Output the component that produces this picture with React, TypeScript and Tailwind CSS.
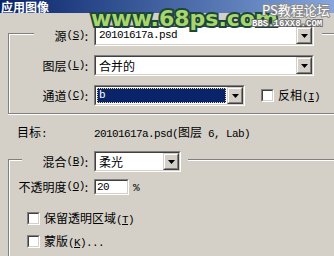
import React from 'react';

const Lat = ({ children }: { children: React.ReactNode }) => (
    <span className="font-['Liberation_Mono',monospace] text-[11px] tracking-[-0.6px]">{children}</span>
);

// access key, underlined like the old win32 dialogs
const Key = ({ k }: { k: string }) => (
    <Lat>
        (<span className="underline underline-offset-1">{k}</span>)
    </Lat>
);

const Etch = ({ className = '' }: { className?: string }) => (
    <div className={`h-[2px] border-t border-b border-t-[#808080] border-b-white ${className}`} />
);

const Sunken = ({ className = '', children }: { className?: string; children?: React.ReactNode }) => (
    <div className={`border border-t-[#808080] border-l-[#808080] border-b-white border-r-white ${className}`}>
        <div className="h-full w-full flex border border-t-[#404040] border-l-[#404040] border-b-[#d4d0c8] border-r-[#d4d0c8] bg-white">
            {children}
        </div>
    </div>
);

const ArrowBtn = () => (
    <div className="w-[16px] h-full bg-[#d4d0c8] border border-t-[#d4d0c8] border-l-[#d4d0c8] border-b-[#404040] border-r-[#404040]">
        <div className="h-full w-full flex items-center justify-center border border-t-white border-l-white border-b-[#808080] border-r-[#808080]">
            <svg width="7" height="4" viewBox="0 0 7 4">
                <path d="M0 0h7L3.5 4z" fill="#000" />
            </svg>
        </div>
    </div>
);

const Combo = ({ className, children, selected }: { className: string; children: React.ReactNode; selected?: boolean }) => (
    <Sunken className={`h-[21px] ${className}`}>
        <div className="flex-1 flex items-center p-[1px]">
            {selected ? (
                <div className="h-full w-full flex items-center pl-[1px] bg-[#0a246a] text-white border border-dotted border-[#f5db95]">
                    {children}
                </div>
            ) : (
                <div className="pl-[2px] flex items-center">{children}</div>
            )}
        </div>
        <ArrowBtn />
    </Sunken>
);

const Check = () => <Sunken className="w-[13px] h-[13px]" />;

const Label = ({ className, children }: { className: string; children: React.ReactNode }) => (
    <div className={`h-[21px] flex items-center justify-end whitespace-nowrap ${className}`}>{children}</div>
);

export default function App() {
    return (
        <div className="relative w-[334px] h-[256px] overflow-hidden flex flex-col bg-[#d4d0c8] text-black text-[12px] font-['Noto_Sans_CJK_SC','Liberation_Sans',sans-serif]">
            <div className="h-[13px] shrink-0 flex items-center pl-[1px] bg-linear-to-r from-[#0a246a] to-[#86a6dc]">
                <span className="text-white font-bold text-[12px] leading-[12px]">应用图像</span>
            </div>

            {/* 源 group */}
            <div className="ml-[8px] mt-[20px] pb-[7px] border-l border-b border-[#808080] shadow-[inset_1px_0_0_#fff,0_1px_0_#fff]">
                <div className="flex items-start -mt-[8px] h-[21px]">
                    <Etch className="mt-[8px] w-[25px]" />
                    <Label className="w-[54px]">
                        源<Key k="S" />:
                    </Label>
                    <Combo className="ml-[6px] w-[220px]">
                        <Lat>20101617a.psd</Lat>
                    </Combo>
                    <Etch className="mt-[8px] ml-[8px] flex-1" />
                </div>
                <div className="flex items-center mt-[9px] h-[21px]">
                    <Label className="w-[79px]">
                        图层<Key k="L" />:
                    </Label>
                    <Combo className="ml-[6px] w-[220px]">合并的</Combo>
                </div>
                <div className="flex items-center mt-[9px] h-[21px]">
                    <Label className="w-[79px]">
                        通道<Key k="C" />:
                    </Label>
                    <Combo className="ml-[6px] w-[151px]" selected>
                        <Lat>b</Lat>
                    </Combo>
                    <div className="ml-[16px]">
                        <Check />
                    </div>
                    <span className="ml-[4px]">
                        反相<Key k="I" />
                    </span>
                </div>
            </div>

            <div className="flex items-center mt-[12px] h-[14px] pl-[17px] whitespace-nowrap">
                <span className="w-[77px]">
                    目标<Lat>:</Lat>
                </span>
                <span>
                    <Lat>20101617a.psd(</Lat>图层<Lat> 6, Lab)</Lat>
                </span>
            </div>

            {/* 混合 group */}
            <div className="flex-1 ml-[8px] mt-[19px] border-l border-[#808080] shadow-[inset_1px_0_0_#fff]">
                <div className="flex items-start -mt-[8px] h-[21px]">
                    <Etch className="mt-[8px] w-[13px]" />
                    <Label className="w-[66px]">
                        混合<Key k="B" />:
                    </Label>
                    <Combo className="ml-[6px] w-[87px]">柔光</Combo>
                    <Etch className="mt-[8px] ml-[7px] flex-1" />
                </div>
                <div className="flex items-center mt-[7px] h-[16px]">
                    <div className="w-[79px] flex justify-end whitespace-nowrap">
                        不透明度<Key k="O" />:
                    </div>
                    <Sunken className="ml-[6px] w-[35px] h-[16px]">
                        <div className="pl-[1px] flex items-center">
                            <Lat>20</Lat>
                        </div>
                    </Sunken>
                    <span className="ml-[4px]">
                        <Lat>%</Lat>
                    </span>
                </div>
                <div className="flex items-center mt-[17px] h-[13px] pl-[18px]">
                    <Check />
                    <span className="ml-[4px]">
                        保留透明区域<Key k="T" />
                    </span>
                </div>
                <div className="flex items-center mt-[10px] h-[13px] pl-[18px]">
                    <Check />
                    <span className="ml-[4px]">
                        蒙版<Key k="K" />
                        <Lat>...</Lat>
                    </span>
                </div>
            </div>

            {/* watermark stamped over the screenshot */}
            <div className="absolute left-[91px] top-[8px] pointer-events-none font-['DejaVu_Sans',sans-serif] font-bold text-[22px] leading-[22px] text-[#a8d66c] [-webkit-text-stroke:4px_#1c463b] [paint-order:stroke_fill]">
                www.68ps.com
            </div>
            <div className="absolute left-[262px] top-[2px] pointer-events-none text-[13px] leading-[15px] text-white [-webkit-text-stroke:2px_#8c8c8c] [paint-order:stroke_fill]">
                PS教程论坛
            </div>
            <div className="absolute left-[252px] top-[19px] pointer-events-none font-['Liberation_Mono',monospace] font-bold text-[9px] leading-[10px] text-white [-webkit-text-stroke:2px_#6e6e6e] [paint-order:stroke_fill]">
                BBS.16XX8.COM
            </div>
        </div>
    );
}
